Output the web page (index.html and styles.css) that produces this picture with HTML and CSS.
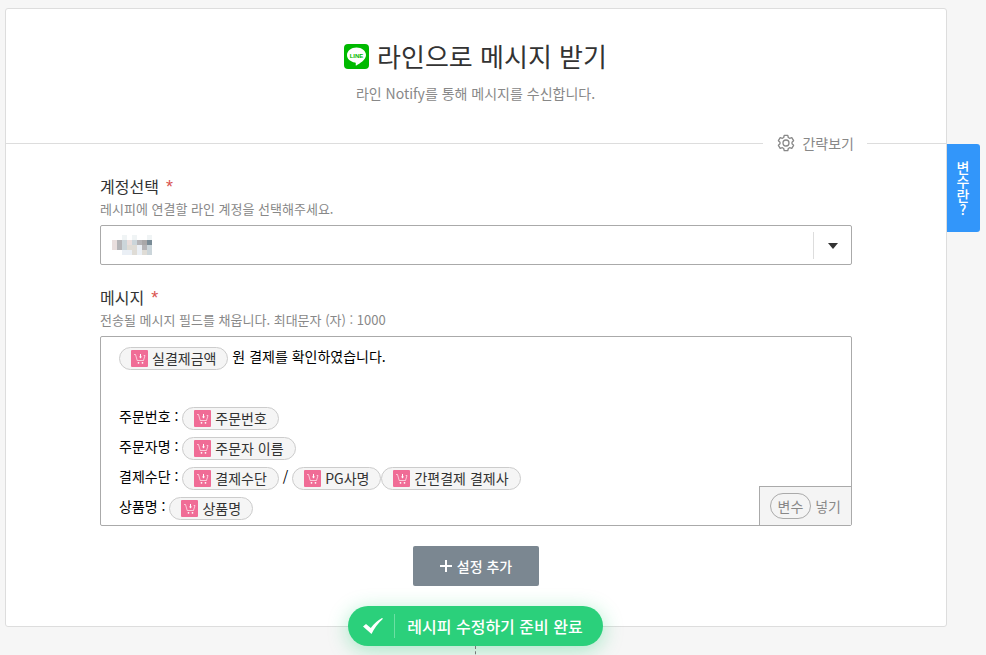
FILE: index.html
```
<!DOCTYPE html>
<html lang="ko">
<head>
  <meta charset="UTF-8" />
  <meta name="viewport" content="width=device-width, initial-scale=1.0"/>
  <title>라인으로 메시지 받기</title>
  <link rel="stylesheet" href="styles.css">
</head>
<body>
  <!-- 공용 아이콘 -->
  <svg class="sprite" aria-hidden="true">
    <symbol id="cart" viewBox="0 0 17 17">
      <rect width="17" height="17" rx="1" fill="#f06c96"/>
      <path d="M3 4.500h1.500l1.700 6h6.300l1.500-5h-1.300" fill="none" stroke="#fff" stroke-opacity=".7" stroke-width=".9"/>
      <path d="M9.500 4v3" stroke="#fff"/>
      <path d="M8 6.500h3L9.500 8.500z" fill="#fff"/>
      <circle cx="7.500" cy="12.800" r=".9" fill="#fff"/>
      <circle cx="11.500" cy="12.800" r=".9" fill="#fff"/>
    </symbol>
  </svg>

  <div class="layout">
    <main class="card">
      <header class="card-header">
        <h1>
          <svg class="line-logo" viewBox="0 0 25 25" aria-hidden="true">
            <rect width="25" height="25" rx="4" fill="#00b900"/>
            <path d="M12.500 3.500C7.300 3.500 3 6.900 3 11.100c0 3.800 3.400 6.900 8 7.500 1 .2.900.7.700 2.400 0 .7.400.6 1 .3C15.400 19.800 22 16 22 11.100 22 6.900 17.700 3.500 12.500 3.500z" fill="#fff"/>
            <text x="12.500" y="13.500" class="line-logo-text">LINE</text>
          </svg>
          라인으로 메시지 받기
        </h1>
        <p>라인 Notify를 통해 메시지를 수신합니다.</p>
      </header>

      <div class="divider">
        <button type="button" class="simple-view">
          <svg viewBox="0 0 18 18" aria-hidden="true">
            <path d="M7.200 1.300h3.600l.5 2.200 1.300.8 2.200-.7 1.800 3.100-1.600 1.500v1.600l1.600 1.500-1.800 3.100-2.200-.7-1.300.8-.5 2.200H7.200l-.5-2.200-1.300-.8-2.200.7-1.800-3.100L3 9.800V8.200L1.400 6.700l1.800-3.100 2.200.7 1.300-.8z"/>
            <circle cx="9" cy="9" r="3"/>
          </svg>
          간략보기
        </button>
      </div>

      <form class="form">
        <div class="field">
          <label for="account">계정선택 <span class="required">*</span></label>
          <p class="help">레시피에 연결할 라인 계정을 선택해주세요.</p>
          <div class="select-box">
            <select id="account"><option></option></select>
            <!-- 가려진 계정 이름 -->
            <svg class="masked" viewBox="0 0 8 4" aria-hidden="true">
              <path fill="#f0f4f5" d="M2 0h1v1H2zM4 0h1v1H4zM7 0h1v1H7z"/>
              <path fill="#e9dedd" d="M0 1h1v2H0zM3 1h1v1H3z"/>
              <path fill="#b5b4b7" d="M1 1h1v2H1zM5 1h1v1H5zM6 2h1v1H6z"/>
              <path fill="#cbd5da" d="M2 1h1v2H2zM4 1h1v1H4zM7 2h1v2H7z"/>
              <path fill="#dfdcd6" d="M3 2h1v1H3zM4 2h1v2H4zM6 3h1v1H6z"/>
              <path fill="#a9a7a8" d="M6 1h1v1H6z"/>
              <path fill="#798b96" d="M7 1h1v1H7z"/>
              <path fill="#eaeff5" d="M2 3h2v1H2zM5 2h1v2H5z"/>
            </svg>
            <span class="select-arrow"></span>
          </div>
        </div>

        <div class="field">
          <label id="message-label">메시지 <span class="required">*</span></label>
          <p class="help">전송될 메시지 필드를 채웁니다. 최대문자 (자) : 1000</p>
          <div class="editor">
            <div class="message" contenteditable="true" role="textbox" aria-multiline="true" aria-labelledby="message-label">
              <div><span class="chip"><svg><use href="#cart"/></svg>실결제금액</span> 원 결제를 확인하였습니다.</div>
              <div><br></div>
              <div>주문번호 : <span class="chip"><svg><use href="#cart"/></svg>주문번호</span></div>
              <div>주문자명 : <span class="chip"><svg><use href="#cart"/></svg>주문자 이름</span></div>
              <div>결제수단 : <span class="chip"><svg><use href="#cart"/></svg>결제수단</span> / <span class="chip"><svg><use href="#cart"/></svg>PG사명</span><span class="chip"><svg><use href="#cart"/></svg>간편결제 결제사</span></div>
              <div>상품명 : <span class="chip"><svg><use href="#cart"/></svg>상품명</span></div>
            </div>
            <button type="button" class="insert"><span>변수</span> 넣기</button>
          </div>
        </div>

        <button type="button" class="add">
          <svg viewBox="0 0 12 12" aria-hidden="true"><path d="M6 0v12M0 6h12"/></svg>
          설정 추가
        </button>
      </form>
    </main>

    <button type="button" class="side-tab">변수란?</button>
  </div>

  <div class="finish">
    <button type="button" class="ready">
      <svg viewBox="0 0 20 16" aria-hidden="true"><path d="M0 8.500L3 6l4.800 4Q12.500 3.500 19 0l1 .8Q13 7 8.500 16z"/></svg>
      <span>레시피 수정하기 준비 완료</span>
    </button>
    <div class="connector"></div>
  </div>
</body>
</html>
```
FILE: styles.css
```
:root {
  --bg: #f6f6f6;
  --line: #ddd;
  --field-line: #aaa;
  --text: #333;
  --muted: #888;
  --blue: #3296fa;
  --green: #2bd07b;
}

* {
  margin: 0;
  padding: 0;
  box-sizing: border-box;
}

body {
  font-family: "Noto Sans CJK KR", sans-serif;
  font-size: 14px;
  line-height: 20px;
  background-color: var(--bg);
  color: var(--text);
  overflow: hidden;
}

button {
  font: inherit;
  border: none;
  cursor: pointer;
}

.sprite {
  display: none;
}

.layout {
  display: flex;
  align-items: flex-start;
  padding: 8px 6px 0 5px;
}

.card {
  flex: 1;
  background-color: #fff;
  border: 1px solid var(--line);
  border-radius: 3px;
}

.card-header {
  padding: 27px 21px 0 20px;
  text-align: center;
}

.card-header h1 {
  display: flex;
  justify-content: center;
  align-items: center;
  gap: 8px;
  font-size: 26px;
  font-weight: 400;
  line-height: 40px;
}

.line-logo {
  width: 25px;
  height: 25px;
}

.line-logo-text {
  font-family: "Liberation Sans", sans-serif;
  font-size: 6px;
  font-weight: 700;
  text-anchor: middle;
  fill: #00b900;
}

.card-header p {
  margin-top: 7px;
  color: var(--muted);
}

/* 구분선 */
.divider {
  display: flex;
  align-items: center;
  margin-top: 30px;
}

.divider::before,
.divider::after {
  content: "";
  height: 1px;
  background-color: var(--line);
}

.divider::before {
  flex: 1;
}

.divider::after {
  width: 79px;
}

.simple-view {
  display: flex;
  align-items: center;
  gap: 7px;
  padding: 0 13px 0 14px;
  background: none;
  color: var(--muted);
}

.simple-view svg {
  width: 18px;
  height: 18px;
  fill: none;
  stroke: var(--muted);
  stroke-width: 1.3;
  stroke-linejoin: round;
}

/* 입력 폼 */
.form {
  display: flex;
  flex-direction: column;
  padding: 21px 94px 40px;
}

.field {
  margin-bottom: 20px;
}

.field label {
  display: flex;
  gap: 7px;
  margin-bottom: 1px;
  font-size: 16px;
  line-height: 24px;
}

.required {
  padding-top: 2px;
  font-family: "Liberation Sans", sans-serif;
  font-size: 18px;
  line-height: 22px;
  color: #d9534f;
}

.help {
  margin-bottom: 6px;
  font-size: 13px;
  color: var(--muted);
}

.select-box {
  position: relative;
}

.select-box select {
  display: block;
  width: 100%;
  height: 40px;
  padding: 0 50px 0 12px;
  font: inherit;
  background-color: #fff;
  border: 1px solid var(--field-line);
  border-radius: 2px;
  appearance: none;
}

.masked {
  position: absolute;
  top: 10px;
  left: 12px;
  width: 40px;
  height: 20px;
  pointer-events: none;
}

.select-arrow {
  position: absolute;
  top: 7px;
  right: 1px;
  display: flex;
  align-items: center;
  justify-content: center;
  width: 38px;
  height: 27px;
  border-left: 1px solid var(--line);
  pointer-events: none;
}

.select-arrow::after {
  content: "";
  border: 5px solid transparent;
  border-top: 6px solid var(--text);
  border-bottom: none;
}

.editor {
  position: relative;
  border: 1px solid var(--field-line);
  border-radius: 2px;
}

.message {
  padding: 4px 18px;
  line-height: 30px;
  color: #000;
  outline: none;
}

.chip {
  display: inline-flex;
  align-items: center;
  gap: 4px;
  height: 23px;
  padding: 0 11px;
  vertical-align: middle;
  line-height: 21px;
  color: var(--text);
  background-color: #f5f5f5;
  border: 1px solid #ccc;
  border-radius: 12px;
}

.chip svg {
  width: 17px;
  height: 17px;
}

.insert {
  position: absolute;
  right: 0;
  bottom: 0;
  height: 39px;
  padding: 0 10px;
  color: var(--muted);
  background-color: #f4f4f4;
  border-top: 1px solid var(--field-line);
  border-left: 1px solid var(--field-line);
}

.insert span {
  display: inline-block;
  padding: 2px 7px;
  border: 1px solid var(--field-line);
  border-radius: 13px;
}

.add {
  display: flex;
  align-items: center;
  align-self: center;
  gap: 5px;
  height: 40px;
  padding: 0 27px;
  font-weight: 500;
  color: #fff;
  background-color: #7b8791;
  border-radius: 2px;
}

.add svg {
  width: 12px;
  height: 12px;
  stroke: #fff;
  stroke-width: 2;
}

.side-tab {
  width: 33px;
  height: 88px;
  margin-top: 136px;
  padding: 2px 1px 0 0;
  font-weight: 500;
  color: #fff;
  background-color: var(--blue);
  border-radius: 0 3px 3px 0;
  writing-mode: vertical-rl;
  text-orientation: upright;
}

/* 하단 완료 버튼 */
.finish {
  position: relative;
  display: flex;
  flex-direction: column;
  align-items: center;
  margin-top: -21px;
  padding: 0 40px 0 5px;
}

.ready {
  display: flex;
  align-items: center;
  height: 40px;
  padding: 0 20px 0 15px;
  font-size: 16px;
  font-weight: 500;
  color: #fff;
  background-color: var(--green);
  border-radius: 20px;
  box-shadow: 0 4px 20px rgba(43, 208, 123, 0.4);
}

.ready svg {
  width: 20px;
  height: 16px;
  margin-right: 11px;
  fill: #fff;
}

.ready span {
  padding-left: 12px;
  line-height: 24px;
  border-left: 1px solid #6be0a3;
}

.connector {
  height: 40px;
  border-left: 1px dashed #777;
}
```
